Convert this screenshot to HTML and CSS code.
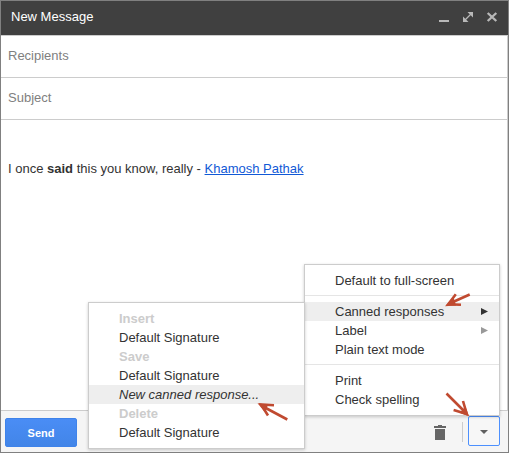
FILE: index.html
```html
<!DOCTYPE html>
<html lang="en">
<head>
<meta charset="utf-8">
<title>New Message</title>
<link rel="stylesheet" href="styles.css">
</head>
<body>
<div class="compose">
  <header class="titlebar">
    <span class="title">New Message</span>
    <svg class="controls" width="60" height="14" viewBox="0 0 60 14">
      <path d="M0 10h10v2H0z" fill="#b8b8b8"/>
      <path d="M28.500 2H34v5.500zM24 6.500V12h5.500z" fill="#b8b8b8"/>
      <path d="M25.500 10.500l7-7" fill="none" stroke="#b8b8b8" stroke-width="1.300"/>
      <path d="M48.700 3l8.600 8M57.300 3l-8.600 8" fill="none" stroke="#b8b8b8" stroke-width="2.300"/>
    </svg>
  </header>
  <div class="field">Recipients</div>
  <div class="field">Subject</div>
  <main class="body"><span class="message">I once <b>said</b> this you know, really - <a href="#">Khamosh Pathak</a></span></main>
  <footer class="toolbar">
    <button class="send">Send</button>
    <div class="tools">
      <svg class="trash" width="12" height="15" viewBox="0 0 12 15"><path d="M0 1h4V0h4v1h4v2H0zM1 4h10v11H1z" fill="#666"/></svg>
      <span class="divider"></span>
      <div class="more"><svg width="8" height="4" viewBox="0 0 8 4"><path d="M0 0h8L4 4z" fill="#606060"/></svg></div>
    </div>
  </footer>
</div>

<div class="menu options">
  <div class="item">Default to full-screen</div>
  <div class="separator"></div>
  <div class="item active"><span>Canned responses</span><svg width="7" height="7" viewBox="0 0 7 7"><path d="M0 0l7 3.500-7 3.500z" fill="#333"/></svg></div>
  <div class="item"><span>Label</span><svg width="7" height="7" viewBox="0 0 7 7"><path d="M0 0l7 3.500-7 3.500z" fill="#999"/></svg></div>
  <div class="item">Plain text mode</div>
  <div class="separator"></div>
  <div class="item">Print</div>
  <div class="item">Check spelling</div>
</div>

<div class="menu canned">
  <div class="item heading">Insert</div>
  <div class="item">Default Signature</div>
  <div class="item heading">Save</div>
  <div class="item">Default Signature</div>
  <div class="item active new">New canned response...</div>
  <div class="item heading">Delete</div>
  <div class="item">Default Signature</div>
</div>

<svg class="arrows" width="509" height="453" viewBox="0 0 509 453">
  <g fill="none" stroke="#c04a30" stroke-width="2.600">
    <path d="M469.700 294.500L449 303.800M455.800 294.300l-7.600 10 12.800.500"/>
    <path d="M287.300 419.500L262 406M274 405.200l-13-.700 7 11"/>
    <path d="M446.500 393.500l19 19M463 401l3.800 13-13.200-4"/>
  </g>
  <g fill="#c04a30">
    <path d="M445 306.300l8.500-9 2.500 8.300z"/>
    <path d="M257.500 403.300l11 1.700-4.500 6z"/>
    <path d="M469 416.300l-9.500-3.500 6-6z"/>
  </g>
</svg>
</body>
</html>
```
FILE: styles.css
```css
* { box-sizing: border-box; }
body {
  margin: 0;
  font: 13px/19px "Liberation Sans", Arial, sans-serif;
  color: #333;
}
.compose {
  width: 509px;
  height: 453px;
  display: flex;
  flex-direction: column;
  border: 1px solid #808080;
  background: #fff;
  box-shadow: inset -1px 0 #ccc;
}
.titlebar {
  height: 35px;
  flex: none;
  display: flex;
  justify-content: space-between;
  align-items: center;
  padding: 0 9px 3px 10px;
  background: #404040;
  border-bottom: 1px solid #ccc;
  color: #fff;
}
.field {
  height: 42px;
  flex: none;
  padding: 10px 7px;
  border-bottom: 1px solid #ccc;
  color: #808080;
}
.body { flex: 1; padding: 39px 7px 0; }
.body a { color: #1159d6; }
.toolbar {
  height: 42px;
  flex: none;
  display: flex;
  justify-content: space-between;
  padding: 4px 8px 4px 4px;
  border-top: 1px solid #ccc;
  background: #f5f5f5;
}
.send {
  width: 72px;
  height: 29px;
  margin-top: 3px;
  padding: 0;
  border: 1px solid #3f83ea;
  border-radius: 2px;
  background: linear-gradient(#4a8df5, #4285e8);
  color: #fff;
  font: bold 11px "Liberation Sans", Arial, sans-serif;
}
.tools { display: flex; align-items: center; }
.trash { margin: 2px 16px 0 0; }
.divider { width: 1px; height: 20px; margin-right: 5px; background: #ccc; }
.more {
  width: 32px;
  height: 30px;
  margin-bottom: 1px;
  display: flex;
  align-items: center;
  justify-content: center;
  padding-top: 2px;
  border: 1px solid #4d90fe;
  border-radius: 2px;
  background: #f7f7f7;
}
.menu {
  position: absolute;
  padding: 6px 0;
  background: #fff;
  border: 1px solid #ccc;
  box-shadow: 0 1px 3px rgba(0, 0, 0, .2);
}
.options { left: 304px; top: 264px; width: 196px; }
.canned { left: 88px; top: 302px; width: 217px; }
.item {
  height: 19px;
  display: flex;
  align-items: center;
  justify-content: space-between;
  padding: 0 11px 0 30px;
}
.active { background: #eee; }
.separator { height: 1px; margin: 5px 0 6px; background: #e5e5e5; }
.heading { font-weight: bold; color: #ccc; }
.new { font-style: italic; }
.arrows { position: absolute; left: 0; top: 0; pointer-events: none; }
```
